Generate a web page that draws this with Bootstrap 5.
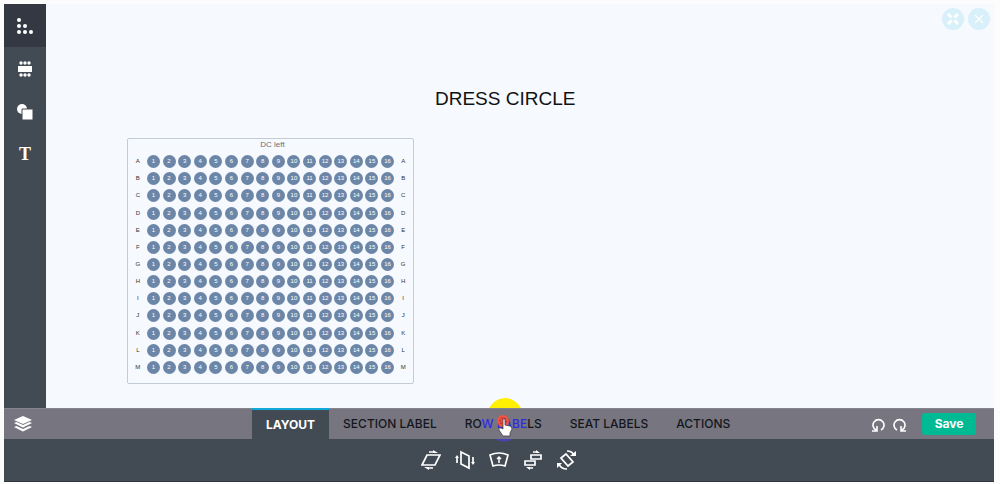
<!DOCTYPE html>
<html lang="en">
<head>
<meta charset="utf-8">
<meta name="viewport" content="width=device-width, initial-scale=1">
<title>Seating plan editor</title>
<link href="https://cdn.jsdelivr.net/npm/bootstrap@5.3.0/dist/css/bootstrap.min.css" rel="stylesheet">
<style>
body { background: #fcfcfd; font-family: Inter, "Liberation Sans", sans-serif; }
.editor { padding: 4px 6px 2px 4px; }
.editor button { border: 0; background: none; padding: 0; color: #fff; }
.editor svg { display: block; fill: none; stroke: currentColor; stroke-width: 2; }
.tools { width: 42px; background: #424a54; }
.tools .tool { height: 43px; }
.tools .tool.active { background: #333843; }
.editor .tools svg, .editor .solid svg { fill: currentColor; stroke: none; }
.editor .tool-text { font: bold 18px/24px "Liberation Serif", serif; padding-bottom: 2px; }
.stage { background: #f6f9fe; overflow: hidden; }
.stage-title { left: 389px; top: 84px; font: 19px/22px "Liberation Sans", sans-serif; color: #111; }
.section-box { left: 81px; top: 134px; width: 287px; height: 246px; border: 1px solid #c3ccd5; border-radius: 2px; padding: 0 2px; font-family: "Liberation Sans", sans-serif; }
.section-name { font-size: 8px; line-height: 12px; height: 14px; color: #6a6f78; padding-left: 4px; }
.seats { display: grid; grid-template-columns: repeat(18, 1fr); grid-auto-rows: 1fr; height: 223px; place-items: center; font-size: 6px; line-height: 13px; color: #333; }
.seat { width: 13px; height: 13px; border-radius: 50%; background: #6c86a8; color: #fff; text-align: center; }
.view-controls { top: 4px; right: 4px; gap: 4px; }
.editor .view-controls button { width: 22px; height: 22px; border-radius: 50%; background: #d8f0fa; }
.pulse { left: 440px; bottom: -34px; width: 38px; height: 44px; border-radius: 50%; background: #fff000; }
.tabbar { background: #767580; height: 31px; border-top: 1px solid #85858e; }
.layers { width: 248px; padding: 3px 0 0 10px; }
.editor .tab { height: 31px; margin-top: -1px; color: #14161c; font-size: 12px; line-height: 30px; font-weight: 500; padding: 0 14px; white-space: nowrap; }
.editor .tab.active { background: #424a54; color: #fff; font-weight: 700; border-top: 2px solid #11a9dc; line-height: 28px; }
.tab .lit { color: #2e2ce0; }
.tabbar-end { padding-right: 18px; }
.editor .save { background: #00ba94; border-radius: 3px; width: 54px; height: 22px; font-size: 12px; font-weight: 700; line-height: 22px; }
.actions { background: #424a54; height: 43px; padding-left: 417px; gap: 14px; border-bottom: 1px solid #30363f; }
.cursor { left: 50%; bottom: -8px; width: 26px; height: 32px; margin-left: -12px; pointer-events: none; }
.editor .cursor { stroke: none; }
</style>
</head>
<body>
<div class="editor d-flex flex-column vh-100">
  <div class="d-flex flex-grow-1">
    <nav class="tools d-flex flex-column flex-shrink-0" aria-label="Tools">
      <button class="tool active d-flex align-items-center justify-content-center" aria-label="Rows"><svg width="16" height="16"><circle cx="2" cy="2" r="2"/><circle cx="2" cy="8" r="2"/><circle cx="8" cy="8" r="2"/><circle cx="2" cy="14" r="2"/><circle cx="8" cy="14" r="2"/><circle cx="14" cy="14" r="2"/></svg></button>
      <button class="tool d-flex align-items-center justify-content-center" aria-label="Tables"><svg width="14" height="16"><path d="M0 5h14v6H0z"/><circle cx="3" cy="2" r="1.700"/><circle cx="7" cy="2" r="1.700"/><circle cx="11" cy="2" r="1.700"/><circle cx="3" cy="14" r="1.700"/><circle cx="7" cy="14" r="1.700"/><circle cx="11" cy="14" r="1.700"/></svg></button>
      <button class="tool d-flex align-items-center justify-content-center" aria-label="Shapes"><svg width="16" height="16"><circle cx="5" cy="5" r="5"/><path d="M5 5h11v11H5z" stroke="#424a54" stroke-width="1"/></svg></button>
      <button class="tool tool-text" aria-label="Text">T</button>
    </nav>
    <main class="stage position-relative flex-grow-1">
      <h1 class="stage-title position-absolute m-0 text-nowrap">DRESS CIRCLE</h1>
      <section class="section-box position-absolute">
        <div class="section-name text-center">DC left</div>
        <div class="seats" id="seats"></div>
      </section>
      <div class="view-controls position-absolute d-flex">
        <button class="d-flex align-items-center justify-content-center" aria-label="Fit to screen"><svg width="12" height="12"><path d="M1 1l3.500 3.500M11 1L7.500 4.500M1 11l3.500-3.500M11 11L7.500 7.500" stroke-width="3"/></svg></button>
        <button class="d-flex align-items-center justify-content-center" aria-label="Close"><svg width="10" height="10"><path d="M1 1l8 8M9 1L1 9" stroke-width="1.300"/></svg></button>
      </div>
      <div class="pulse position-absolute"></div>
    </main>
  </div>
  <div class="tabbar d-flex align-items-center">
    <div class="layers solid flex-shrink-0"><button aria-label="Layers"><svg width="18" height="16"><path d="M9 0l9 4-9 4-9-4zM0 7l2.500-1L9 9l6.500-3L18 7l-9 4.500zM0 11l2.500-1L9 13l6.500-3 2.500 1-9 4.500z"/></svg></button></div>
    <button class="tab active">LAYOUT</button>
    <button class="tab">SECTION LABEL</button>
    <button class="tab position-relative">RO<span class="lit">W LABE</span>LS
      <svg class="cursor position-absolute" viewBox="0 0 26 32"><path d="M4 24h18q-9 5-18 0z" fill="#4743b4"/><circle cx="12" cy="6" r="6" fill="#ef5442"/><circle cx="12" cy="6" r="3" fill="none" stroke="#b92b3b" stroke-width="1.500" stroke-dasharray="1.500 1.500"/><path d="M12 4q2-1 2 1v5l5 1q2 1 2 3l-2 4v3h-7l-4-6q-1-3 2-2l2 1V5z" fill="#fff" stroke="#333" stroke-width=".7"/></svg>
    </button>
    <button class="tab">SEAT LABELS</button>
    <button class="tab">ACTIONS</button>
    <div class="tabbar-end d-flex align-items-center ms-auto">
      <button class="me-2" aria-label="Undo"><svg width="13" height="15"><path d="M4 13A5.500 5.500 0 1 1 9 13M0 14h5V9" stroke-width="1.600"/></svg></button>
      <button class="me-3" aria-label="Redo"><svg width="13" height="15"><path d="M4 13A5.500 5.500 0 1 1 9 13M13 14H8V9" stroke-width="1.600"/></svg></button>
      <button class="save">Save</button>
    </div>
  </div>
  <div class="actions d-flex align-items-center">
    <button aria-label="Skew horizontally"><svg width="20" height="20"><path d="M6 5h13l-5 10H1zM8 2h6M6 18h6" stroke-width="1.700"/><path d="M12 0l5 3h-5zM8 20l-5-3h5z" fill="#fff" stroke="none"/></svg></button>
    <button aria-label="Skew vertically"><svg width="20" height="20"><path d="M6 2l8 4v12l-8-4zM2 7v6M18 7v6" stroke-width="1.700"/><path d="M0 8l2-3 2 3zM16 12l2 3 2-3z" fill="#fff" stroke="none"/></svg></button>
    <button aria-label="Curve"><svg width="20" height="20"><path d="M1 5q9-4 18 0l-3 11q-6-2-12 0z" stroke-width="1.700"/><path d="M10 13V7M8 9l2-2 2 2" stroke-width="1.500"/></svg></button>
    <button aria-label="Stagger rows"><svg width="20" height="20"><path d="M8 5h10v4H8zM2 11h10v4H2zM10 2h5M5 18h5" stroke-width="1.700"/><path d="M13 0l4 3h-4zM7 20l-4-3h4z" fill="#fff" stroke="none"/></svg></button>
    <button aria-label="Rotate"><svg width="20" height="20"><path d="M4 8l5-4 7 8-5 4zM10 1q5 0 7 4M10 19q-6 0-8-5" stroke-width="1.700"/><path d="M13 6h6V1zM0 18v-5h5z" fill="#fff" stroke="none"/></svg></button>
  </div>
</div>
<script src="https://cdn.jsdelivr.net/npm/bootstrap@5.3.0/dist/js/bootstrap.bundle.min.js"></script>
<script>
const grid = document.getElementById('seats');
const add = (text, cls) => {
  const el = document.createElement('span');
  el.textContent = text;
  el.className = cls;
  grid.append(el);
};
for (const row of 'ABCDEFGHIJKLM') {
  add(row, 'row-name');
  for (let n = 1; n <= 16; n++) add(n, 'seat');
  add(row, 'row-name');
}
</script>
</body>
</html>
